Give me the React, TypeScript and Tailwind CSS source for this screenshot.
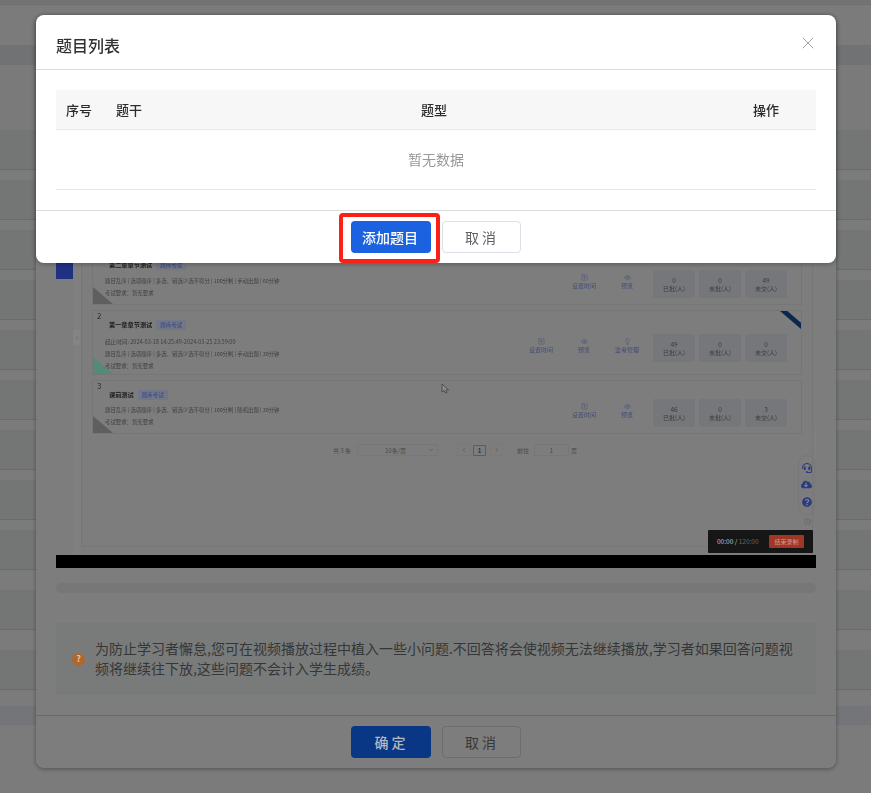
import React from "react";
import { ChevronDown, ChevronLeft, ChevronRight, ChevronsLeft, CircleDot, Eye, Lightbulb, SquareArrowUp, X } from "lucide-react";
import { FaCloudDownloadAlt, FaHeadset, FaQuestionCircle } from "react-icons/fa";

const font = { fontFamily: '"Noto Sans CJK SC", "Liberation Sans", sans-serif' };

const DARK = "h-[40px] bg-[#747676] border-b border-[#6b6b6b]";
const LIGHT = "h-[10px] bg-[#7b7b7b]";
const rows = [
  "h-[4px] bg-[#737373]",
  "h-[41px] bg-[#7b7b7b] border-t border-[#6f6f6f]",
  "h-[20px] bg-[#717274]",
  "h-[65px] bg-[#7a7a7a]",
  DARK,
  LIGHT,
  DARK,
  LIGHT,
  DARK,
  LIGHT,
  DARK,
  LIGHT,
  DARK,
  LIGHT,
  DARK,
  LIGHT,
  DARK,
  LIGHT,
  DARK,
  LIGHT,
  DARK,
  "h-[20px] bg-[#7b7b7b]",
  DARK,
  "h-[20px] bg-[#7b7b7b]",
  DARK,
  "h-[16px] bg-[#7b7b7b]",
  "h-[19px] bg-[#747578]",
];

function Action({ icon, label }: { icon: React.ReactNode; label: string }) {
  return (
    <div className="flex w-[43px] flex-col items-center text-[6px] leading-[8px] text-[#414d78] whitespace-nowrap">
      {icon}
      <span className="mt-[1px]">{label}</span>
    </div>
  );
}

function Stat({ value, label }: { value: string; label: string }) {
  return (
    <div className="flex h-[28px] w-[42px] flex-col items-center justify-center rounded-[2px] bg-[#75777a] text-[6px] leading-[8px] text-[#3c3c3c]">
      <span className="text-[6.5px]">{value}</span>
      <span className="mt-[1px]">{label}</span>
    </div>
  );
}

const timer = <SquareArrowUp size={7} strokeWidth={1.4} />;
const eye = <Eye size={7} strokeWidth={1.6} />;
const bulb = <Lightbulb size={7} strokeWidth={1.6} />;

function Tag() {
  return (
    <span className="ml-[4px] flex h-[10px] w-[30px] items-center justify-center bg-[#727786] text-[5.5px] text-[#354488]">
      题库考试
    </span>
  );
}

function ExamCard({
  num,
  title,
  range,
  detail,
  box,
  cornerColor,
  actions,
  stats,
  rightPad,
  ribbon,
  titleGap,
  detailGap,
}: {
  num?: string;
  title: string;
  range?: string;
  detail: string;
  box: string;
  cornerColor: string;
  actions: React.ReactNode;
  stats: string[];
  rightPad: string;
  ribbon?: boolean;
  titleGap: string;
  detailGap: string;
}) {
  return (
    <div className={`relative flex justify-between border border-[#767676] ${box}`}>
      <div className="flex flex-col">
        {num && <div className="pl-[4px] text-[8px] leading-[10px] text-[#2b2b2b]">{num}</div>}
        <div className={`flex items-center pl-[16px] ${titleGap}`}>
          <span className="text-[6.2px] font-bold leading-[10px] text-[#1c1c1c]">{title}</span>
          <Tag />
        </div>
        {range && <div className="mt-[8px] pl-[12px] text-[5.6px] leading-[8px] text-[#404040]">{range}</div>}
        <div className={`${detailGap} pl-[12px] text-[5.4px] leading-[8px] text-[#404040] whitespace-nowrap`}>{detail}</div>
        <div className="mt-[4px] pl-[12px] text-[5.4px] leading-[8px] text-[#404040]">考试要求：暂无要求</div>
      </div>
      <div className={`flex items-start gap-[4px] pr-[14px] ${rightPad}`}>
        <div className="mr-[0.5px] flex pt-[4px]">{actions}</div>
        <Stat value={stats[0]} label="已批(人)" />
        <Stat value={stats[1]} label="未批(人)" />
        <Stat value={stats[2]} label="未交(人)" />
      </div>
      <div className={`absolute bottom-0 left-0 h-[17px] w-[20px] [clip-path:polygon(0_0,100%_100%,0_100%)] ${cornerColor}`} />
      {ribbon && (
        <div className="absolute right-0 top-0 h-[18px] w-[21px] bg-[#0b2850] [clip-path:polygon(0_0,35%_0,100%_65%,100%_100%)]" />
      )}
    </div>
  );
}

function ScreenCapture() {
  return (
    <div className="relative flex h-[292px] bg-[#7d7d7d] blur-[0.45px]" style={font}>
      <div className="w-[17px] shrink-0">
        <div className="h-[16px] bg-[#1f3180]" />
      </div>
      <div className="relative w-[8px] shrink-0 bg-[#7f7f7f]">
        <div className="absolute left-0 top-[67px] flex h-[15px] w-[7px] items-center justify-center bg-[#848484]">
          <ChevronsLeft size={6} className="text-[#6a6a6a]" />
        </div>
      </div>
      <div className="flex h-[284px] flex-1 flex-col gap-[5px] border-b border-l border-[#777] px-[10px]">
        <ExamCard
          title="第二章章节测试"
          detail="题目乱序 | 选项顺序 | 多选、错选少选不得分 | 100分制 | 手动出题 | 60分钟"
          box="h-[42px] border-t-0"
          titleGap="mt-[-3px]"
          detailGap="mt-[7px]"
          cornerColor="bg-[#5f5f5f]"
          rightPad="pt-[7px]"
          stats={["0", "0", "49"]}
          actions={
            <>
              <Action icon={timer} label="设置时间" />
              <Action icon={eye} label="预览" />
            </>
          }
        />
        <ExamCard
          num="2"
          title="第一章章节测试"
          range="起止时间: 2024-03-18 14:25:49-2024-03-25 23:59:00"
          detail="题目乱序 | 选项顺序 | 多选、错选少选不得分 | 100分制 | 手动出题 | 30分钟"
          box="h-[65px]"
          titleGap="mt-[-1px]"
          detailGap="mt-[4px]"
          cornerColor="bg-[#558a78]"
          rightPad="pt-[23px]"
          stats={["49", "0", "0"]}
          ribbon
          actions={
            <>
              <Action icon={timer} label="设置时间" />
              <Action icon={eye} label="预览" />
              <Action icon={bulb} label="监考管理" />
            </>
          }
        />
        <ExamCard
          num="3"
          title="课前测试"
          detail="题目乱序 | 选项顺序 | 多选、错选少选不得分 | 100分制 | 随机出题 | 30分钟"
          box="h-[54px]"
          titleGap="mt-[-1px]"
          detailGap="mt-[6px]"
          cornerColor="bg-[#5f5f5f]"
          rightPad="pt-[18px]"
          stats={["46", "0", "3"]}
          actions={
            <>
              <Action icon={timer} label="设置时间" />
              <Action icon={eye} label="预览" />
            </>
          }
        />
        <div className="mt-[2px] flex h-[18px] items-center pl-[241px] text-[6px] text-[#484848]">
          <span className="w-[24px]">共 3 条</span>
          <div className="flex h-[12px] w-[81px] items-center justify-between rounded-[1px] border border-[#777] pl-[27px] pr-[3px]">
            <span>10条/页</span>
            <ChevronDown size={6} />
          </div>
          <div className="ml-[19px] flex h-[12px] w-[14px] items-center justify-center border border-[#797979]">
            <ChevronLeft size={6} />
          </div>
          <div className="ml-[2px] flex h-[11px] w-[13px] items-center justify-center rounded-[1px] border border-[#4a5a95] font-bold text-[#334]">
            1
          </div>
          <div className="ml-[4px] flex h-[12px] w-[13px] items-center justify-center border border-[#797979]">
            <ChevronRight size={6} />
          </div>
          <span className="ml-[14px]">前往</span>
          <div className="ml-[5px] flex h-[12px] w-[35px] items-center justify-center border border-[#777]">1</div>
          <span className="ml-[2px]">页</span>
        </div>
      </div>
      <div className="w-[4px] shrink-0 border-l border-[#777]" />

      <div className="absolute right-0 top-[167px] h-[25px] w-px bg-[#6e8a80]" />
      <svg className="absolute left-[385px] top-[120px]" width="9" height="11" viewBox="0 0 9 11">
        <path d="M1 1 L1 9 L3 7.5 L4.5 10 L6 9.3 L4.8 7 L7.5 6.8 Z" fill="#8a8a8a" stroke="#3a3a3a" strokeWidth="0.7" />
      </svg>

      <div className="absolute right-[1px] top-[192px] flex h-[60px] w-[17px] flex-col items-center justify-around rounded-full border border-[#777] py-[4px] text-[#2a3b85]">
        <FaHeadset size={10} />
        <FaCloudDownloadAlt size={11} />
        <FaQuestionCircle size={10} />
      </div>
      <CircleDot size={7} className="absolute right-[5.5px] top-[254.5px] text-[#606060]" />
      <div className="absolute bottom-[2px] left-[652px] flex h-[23px] w-[105px] items-center justify-between rounded-[1px] bg-[#161616] px-[9px] text-[6.5px] text-[#c4c4c4]">
        <span>
          00:00 / <span className="text-[#666]">120:00</span>
        </span>
        <span className="flex h-[13px] w-[35px] items-center justify-center rounded-[1px] bg-[#a03624] text-[6px] text-[#c89a90]">
          结束录制
        </span>
      </div>
    </div>
  );
}

export default function App() {
  return (
    <div className="relative h-[793px] w-[871px] overflow-hidden bg-[#7b7b7b]" style={font}>
      {rows.map((r, i) => (
        <div key={i} className={r} />
      ))}

      <div className="absolute left-[36px] top-[15px] flex h-[753px] w-[800px] flex-col rounded-[8px] bg-[#7d7d7d] shadow-[0_1px_4px_rgba(0,0,0,0.35)]">
        <div className="px-[20px] pt-[248px]">
          <ScreenCapture />
          <div className="h-[13px] bg-black" />
          <div className="mt-[15px] h-[10px] rounded-full bg-[#777777]" />
          <div className="mt-[30px] flex h-[72px] items-center bg-[#797b7b] pl-[16px]">
            <span className="flex h-[13px] w-[13px] shrink-0 items-center justify-center rounded-full bg-[#b0662c] text-[9px] font-bold text-[#e0c8a8]">
              ?
            </span>
            <p className="mb-[2px] ml-[10px] w-[705px] text-[14px] leading-[20.5px] text-[#363636]">
              为防止学习者懈怠,您可在视频播放过程中植入一些小问题.不回答将会使视频无法继续播放,学习者如果回答问题视频将继续往下放,这些问题不会计入学生成绩。
            </p>
          </div>
        </div>
        <div className="mt-[20px] flex h-[53px] items-center justify-center gap-[11px] border-t border-[#696969]">
          <button className="h-[32px] w-[80px] rounded-[4px] bg-[#0a3785] pr-[2px] text-[14px] font-medium text-[#b4b8c0]">确 定</button>
          <button className="h-[32px] w-[79px] rounded-[4px] border border-[#6c6c6c] pr-[2px] text-[14px] text-[#383838]">取 消</button>
        </div>
      </div>

      <div className="absolute left-[36px] top-[15px] flex h-[248px] w-[800px] flex-col rounded-[8px] bg-white shadow-[0_1px_5px_rgba(0,0,0,0.3)]">
        <div className="flex h-[55px] items-center justify-between border-b border-[#dcdcdc] pl-[20px] pr-[18px]">
          <h2 className="mt-[6px] text-[16px] font-medium text-[#303133]">题目列表</h2>
          <X size={20} strokeWidth={1} className="mt-[2px] text-[#909399]" />
        </div>
        <div className="flex-1 px-[20px] pt-[20px]">
          <div className="grid h-[40px] grid-cols-[50px_46px_1fr_100px] items-center border-b border-[#e8e8e8] bg-[#f7f7f7] text-[13px] font-medium text-[#2b2b2b]">
            <span className="pl-[10px]">序号</span>
            <span className="pl-[10px]">题干</span>
            <span className="text-center">题型</span>
            <span className="text-center">操作</span>
          </div>
          <div className="flex h-[60px] items-center justify-center border-b border-[#e8e8e8] text-[14px] text-[#999]">暂无数据</div>
        </div>
        <div className="relative flex h-[53px] items-center justify-center gap-[11px] border-t border-[#dcdcdc]">
          <button className="h-[32px] w-[80px] rounded-[4px] bg-[#1a62e0] pr-[2px] text-[14px] font-medium text-white">添加题目</button>
          <button className="h-[32px] w-[79px] rounded-[4px] border border-[#dcdfe6] pr-[2px] text-[14px] text-[#606266]">取 消</button>
          <div className="absolute left-[303px] top-[2px] h-[50px] w-[101px] rounded-[4px] border-[4px] border-[#fb2117]" />
        </div>
      </div>
    </div>
  );
}
